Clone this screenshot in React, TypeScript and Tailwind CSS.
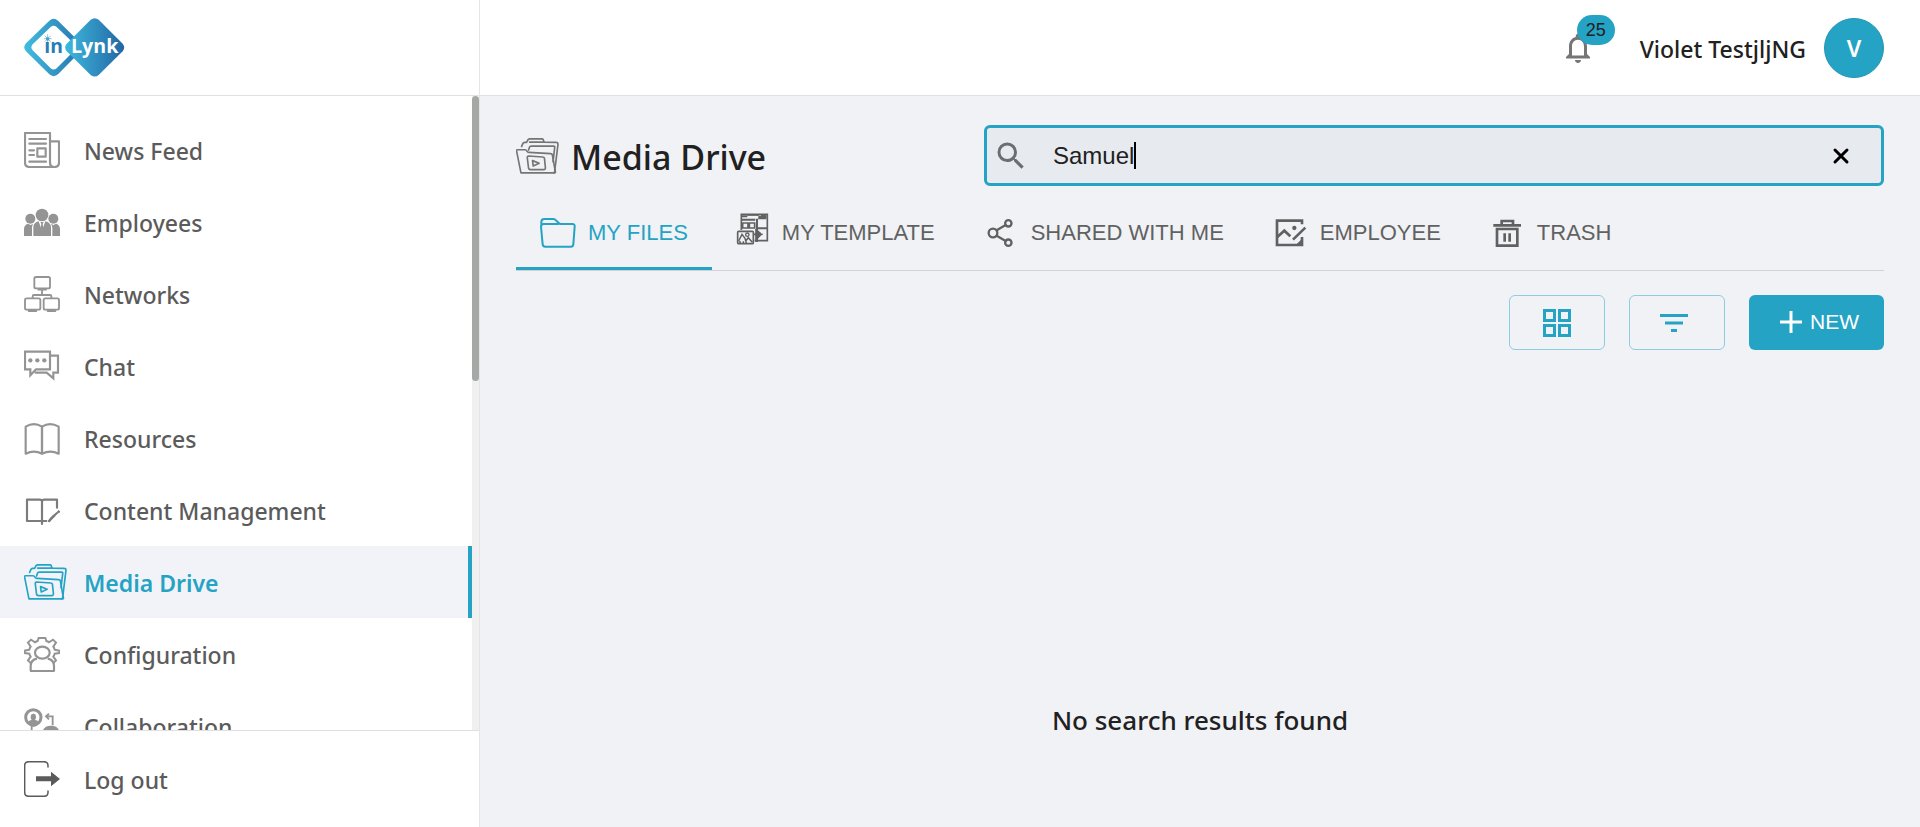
import type { ReactNode } from "react";

function Svg({ box, className, children }: { box: string; className: string; children: ReactNode }) {
  return (
    <svg
      viewBox={box}
      className={className}
      fill="none"
      stroke="currentColor"
      strokeWidth="6.5"
      strokeLinecap="round"
      strokeLinejoin="round"
      aria-hidden="true"
    >
      {children}
    </svg>
  );
}

const NewsIcon = () => (
  <Svg box="72 66 108 108" className="size-9">
    <path d="M150 158V69H75v88q0 14 13 14h76q13 0 13-14V94h-27M150 157q0 14 12 14" />
    <path d="M88 87h50M88 101h50M88 155h50M88 121h14M88 135h14M112 115h25v25h-25z" />
  </Svg>
);

const EmployeesIcon = () => (
  <Svg box="72 282 108 108" className="size-9">
    <g fill="currentColor" stroke="none">
      <circle cx="126" cy="315" r="19" />
      <circle cx="91" cy="326" r="15" />
      <circle cx="160" cy="326" r="15" />
      <path d="M72 378v-20q0-14 12-17l8 4 7-4q-3 6-3 14v23zM180 378v-20q0-14-12-17l-8 4-7-4q4 6 4 14v23z" />
      <path d="M100 378v-26q0-14 16-18l10 28 10-28q17 4 17 18v26z" />
      <path d="M121 336h10l-3 6 3 16-5 6-5-6 3-16z" />
    </g>
  </Svg>
);

const NetworksIcon = () => (
  <Svg box="72 498 108 108" className="size-9">
    <g strokeWidth="5.5">
      <rect x="103" y="501" width="47" height="34" rx="5" />
      <rect x="75" y="565" width="46" height="34" rx="5" />
      <rect x="131" y="565" width="46" height="34" rx="5" />
      <path d="M115 539h23M126 540v14M98 563v-4q0-4 4-4h48q4 0 4 4v4M86 603h23M143 603h23" />
    </g>
  </Svg>
);

const ChatIcon = () => (
  <Svg box="72 54 108 108" className="size-9">
    <path strokeLinejoin="miter" d="M75 65h75v53h-42l-17 18v-18H75zM154 77h20v51h-14v17l-20-17h-33" />
    <g fill="currentColor" stroke="none">
      <circle cx="91" cy="91" r="6.5" />
      <circle cx="112" cy="91" r="6.5" />
      <circle cx="133" cy="91" r="6.5" />
    </g>
  </Svg>
);

const ResourcesIcon = () => (
  <Svg box="72 270 108 108" className="size-9">
    <path d="M126 290q-24-15-49 0v81q25-12 49 0 25-12 50 0v-81q-26-15-50 0zv81" />
    <path d="M126 290v80" />
  </Svg>
);

const ContentIcon = () => (
  <Svg box="72 486 108 108" className="size-9">
    <g className="text-[#7c7c7c]">
      <path d="M126 513q-2-4-6-4H81v64h58M126 513q2-4 6-4h39v24M126 513v69M148 573l6-9 17-15" />
      <path d="M147 573l16-16" strokeWidth="7" />
      <circle cx="176" cy="545" r="3" fill="currentColor" strokeWidth="3" />
    </g>
  </Svg>
);

const MediaIcon = () => (
  <Svg box="72 102 130 108" className="h-9 w-[43px]">
    <g strokeWidth="5">
      <path d="M87 207 74 142q-2-5 3-5h22q4 0 6 4t6 4l66 4q4 0 5 4l9 51q1 3-3 3z" />
      <path d="M89 127l4-9q1-3 5-3h6l4-8q2-3 6-3h36q4 0 5 4l1 6 38 1q5 0 5 5l-10 82q-1 5-3 5" />
      <path d="M113 114h44M110 138l3-9q1-3 5-3h68q4 0 3 4l-5 43" />
      <path d="M106 160q0-4 4-4l43 3q4 0 5 4l3 29q0 5-4 5h-42q-4 0-5-4zM122 170l20 8-18 8z" />
    </g>
  </Svg>
);

const ConfigIcon = () => (
  <Svg box="72 318 108 108" className="size-9">
    <path
      strokeLinejoin="miter"
      strokeLinecap="butt"
      strokeWidth="6"
      d="M93 400l-9-9 8-11q-3-5-4-9l-14-2v-7l14-3q1-5 4-9l-8-12 9-9 12 8q4-3 8-4l3-9h20l3 9q5 1 8 4l12-8 9 9-8 12q3 4 4 9l14 3v7l-14 2q-1 5-4 9l8 11-9 9"
    />
    <ellipse cx="127" cy="368" rx="22" ry="18" />
    <path d="M92 423v-15q0-18 19-22M162 423v-15q0-18-19-22M90 423h74" strokeLinecap="butt" />
  </Svg>
);

const CollabIcon = () => (
  <Svg box="72 534 108 108" className="size-9">
    <circle cx="100" cy="562" r="23" strokeWidth="9" />
    <g fill="currentColor" stroke="none">
      <ellipse cx="100" cy="561" rx="8" ry="10" />
      <path d="M82 579q4-9 14-10h8q10 1 14 10-8 11-18 11t-18-11z" />
      <path d="M128 604q4-17 25-17t25 17z" />
    </g>
    <path d="M95 588v16M158 586v-27h-18M147 551l-9 8 9 9" strokeWidth="5.5" strokeLinecap="butt" strokeLinejoin="miter" />
  </Svg>
);

const LogoutIcon = () => (
  <Svg box="72 693 108 108" className="size-9">
    <path strokeWidth="4.5" d="M144 711v-4q0-12-12-12H86q-12 0-12 12v80q0 12 12 12h46q12 0 12-12v-4" />
    <path fill="currentColor" stroke="none" d="M108 739h45v-14l27 22-27 22v-15h-45z" />
  </Svg>
);

const FolderIcon = () => (
  <Svg box="120 345 108 108" className="size-9">
    <path
      strokeWidth="6"
      d="M124 377v-11q0-9 9-9h27q5 0 8 4l8 8q3 3 7 3h34q8 0 7 8l-4 53q-1 7-7 7h-77q-7 0-8-7l-5-53q0-8 8-8h44"
    />
  </Svg>
);

const TemplateIcon = () => (
  <Svg box="708 343 102 102" className="-mt-1.5 size-[34px]">
    <g strokeLinecap="butt" strokeLinejoin="miter" strokeWidth="5">
      <path d="M724 394v-47h78v79h-38" />
      <path d="M724 353h18M775 355h24M724 363h42M771 360v70M771 389h31" strokeWidth="6" />
      <path d="M742 350h36" strokeWidth="3" />
      <path d="M728 373h16v15h-16zM748 373h16v15h-16zM768 391v38" />
      <path d="M785 350l12 1v9h-20z" strokeWidth="4" />
      <path d="M713 401q0-3 3-3h41q3 0 3 3v31q0 3-3 3h-41q-3 0-3-3z" />
      <path d="M716 427l10-20 9 12 4 14M737 427l8-10 12 14M720 433v-6M730 434v-6" strokeWidth="4.5" />
      <circle cx="742" cy="408" r="5" strokeWidth="4" />
      <path d="M762 407h26M775 396v23" strokeWidth="5" />
      <circle cx="775" cy="407" r="6" fill="currentColor" />
    </g>
  </Svg>
);

const ShareIcon = () => (
  <Svg box="820 78 108 108" className="size-9">
    <g strokeWidth="7">
      <circle cx="850" cy="132" r="13" />
      <circle cx="896" cy="103" r="9.5" />
      <circle cx="896" cy="161" r="9.5" />
      <path d="M861 124l27-16M861 140l27 16" />
    </g>
  </Svg>
);

const ImageEditIcon = () => (
  <Svg box="152 78 108 108" className="size-9">
    <g strokeLinecap="butt" strokeLinejoin="miter" strokeWidth="8">
      <path d="M242 106V95h-75v73h75v-24" />
      <path d="M167 145l22-20 18 17M215 152l37-36" />
      <path d="M224 168l19-18v19z" fill="currentColor" strokeWidth="2" />
      <circle cx="219" cy="117" r="6.5" fill="currentColor" stroke="none" />
    </g>
  </Svg>
);

const TrashIcon = () => (
  <Svg box="796 78 108 108" className="size-9">
    <g strokeLinecap="butt" strokeLinejoin="miter" strokeWidth="8">
      <path d="M809 109h83M834 108V96h34v12M820 120h61v50h-61z" />
      <path d="M843 133v25M858 133v25" />
    </g>
  </Svg>
);

function Logo() {
  return (
    <svg viewBox="72 54 303 177" className="h-[59px] w-[101px]" role="img" aria-label="inLynk">
      <defs>
        <linearGradient id="ring" x1="0" x2="1">
          <stop offset="0" stopColor="#42bce0" />
          <stop offset="1" stopColor="#2573ad" />
        </linearGradient>
        <linearGradient id="solid" x1="0" x2="1">
          <stop offset="0" stopColor="#3fb9de" />
          <stop offset="1" stopColor="#2266a3" />
        </linearGradient>
      </defs>
      <path
        fill="url(#ring)"
        fillRule="evenodd"
        d="M148 62q13-11 26 0l68 68q11 12 0 24l-68 69q-13 11-26 0l-70-69q-11-12 0-24zM152 81l-54 52q-8 9 0 18l54 54q9 7 18 0l54-54q8-9 0-18l-54-52q-9-8-18 0z"
      />
      <path fill="url(#solid)" d="M272 59q12-9 24 0l72 72q9 11 0 23l-72 71q-12 9-24 0l-72-71q-9-12 0-23z" />
      <g stroke="#5d9fc4" strokeWidth="2">
        <path d="M143 103v26M132 116h23M134 107l18 18M152 107l-18 18" />
      </g>
      <circle cx="143" cy="117" r="5" fill="#31a8d4" />
      <text x="133" y="160" fontSize="58" fontWeight="700" fill="#2a7db5" className="font-['Open_Sans',sans-serif]">
        ın
      </text>
      <text x="213" y="160" fontSize="59" fontWeight="700" fill="#fff" className="font-['Open_Sans',sans-serif]">
        Lynk
      </text>
    </svg>
  );
}

const navItems = [
  { label: "News Feed", icon: <NewsIcon /> },
  { label: "Employees", icon: <EmployeesIcon /> },
  { label: "Networks", icon: <NetworksIcon /> },
  { label: "Chat", icon: <ChatIcon /> },
  { label: "Resources", icon: <ResourcesIcon /> },
  { label: "Content Management", icon: <ContentIcon /> },
  { label: "Media Drive", icon: <MediaIcon />, active: true },
  { label: "Configuration", icon: <ConfigIcon /> },
  { label: "Collaboration", icon: <CollabIcon /> },
];

const tabs = [
  { label: "MY FILES", icon: <FolderIcon />, active: true },
  { label: "MY TEMPLATE", icon: <TemplateIcon /> },
  { label: "SHARED WITH ME", icon: <ShareIcon /> },
  { label: "EMPLOYEE", icon: <ImageEditIcon /> },
  { label: "TRASH", icon: <TrashIcon /> },
];

function Sidebar() {
  return (
    <aside className="flex w-[480px] shrink-0 flex-col border-r border-[#e4e5e7] bg-white">
      <div className="flex h-24 shrink-0 items-center border-b border-[#dfe0e2] px-6">
        <Logo />
      </div>
      <div className="flex min-h-0 flex-1">
        <nav className="min-w-0 flex-1 overflow-hidden pt-[18px]">
          <ul>
            {navItems.map((item) => (
              <li key={item.label}>
                <a
                  href="#"
                  className={
                    item.active
                      ? "flex h-[72px] items-center border-r-4 border-[#24a3c4] bg-[#f2f3f8] pl-6 text-[#24a3c4]"
                      : "flex h-[72px] items-center pl-6 text-[#949494]"
                  }
                >
                  <span className="w-15 shrink-0">{item.icon}</span>
                  <span
                    className={
                      item.active ? "pt-0.5 text-[23px] font-semibold" : "pt-0.5 text-[23px] font-medium text-[#5b5b5b]"
                    }
                  >
                    {item.label}
                  </span>
                </a>
              </li>
            ))}
          </ul>
        </nav>
        <div className="w-[7px] shrink-0 bg-[#f0f0f0]">
          <div className="h-[45%] rounded-full bg-[#a5a8a5]" />
        </div>
      </div>
      <button type="button" className="flex h-[97px] shrink-0 items-center border-t border-[#dfe0e2] pl-6 text-[#5b5b5b]">
        <span className="w-15 shrink-0">
          <LogoutIcon />
        </span>
        <span className="pt-0.5 text-[23px] font-medium">Log out</span>
      </button>
    </aside>
  );
}

function Header() {
  return (
    <header className="flex h-24 shrink-0 items-center justify-end border-b border-[#dfe0e2] bg-white pr-9">
      <button type="button" aria-label="Notifications" className="relative mr-11 text-[#757575]">
        <svg viewBox="0 0 24 24" className="size-9" fill="currentColor" aria-hidden="true">
          <path d="M12 22c1.1 0 2-.9 2-2h-4c0 1.100.9 2 2 2zm6-6v-5c0-3.070-1.630-5.640-4.500-6.320V4c0-.83-.67-1.500-1.500-1.500s-1.500.67-1.500 1.500v.68C7.640 5.360 6 7.920 6 11v5l-2 2v1h16v-1l-2-2zm-2 1H8v-6c0-2.480 1.510-4.500 4-4.500s4 2.020 4 4.500v6z" />
        </svg>
        <span className="absolute -top-[15px] left-[17px] flex h-[30px] w-[38px] items-center justify-center rounded-full bg-[#24a3c4] font-['Liberation_Sans',sans-serif] text-lg text-[#212121]">
          25
        </span>
      </button>
      <span className="mr-[18px] pt-1 text-[23px] font-medium text-[#212121]">Violet TestjljNG</span>
      <span className="flex size-15 items-center justify-center rounded-full border border-[#2396b4] bg-[#24a3c4] pt-0.5 text-[23px] font-semibold text-white">
        V
      </span>
    </header>
  );
}

export default function App() {
  return (
    <div className="flex h-screen overflow-hidden bg-[#f0f2f6] font-['Noto_Sans','Open_Sans',sans-serif]">
      <Sidebar />
      <div className="flex min-w-0 flex-1 flex-col">
        <Header />
        <main className="flex-1 px-9 pt-[29px]">
          <div className="flex h-[61px] items-center justify-between">
            <h1 className="flex items-center gap-3 text-[#212121]">
              <span className="text-[#757575]">
                <MediaIcon />
              </span>
              <span className="pt-1 text-[34px] font-medium">Media Drive</span>
            </h1>
            <div className="flex h-full w-[900px] items-center rounded-md border-3 border-[#24a3c4] bg-[#e7eaef] pr-7 pl-1.5">
              <svg viewBox="0 0 24 24" className="size-9 shrink-0 text-[#6b6e70]" fill="currentColor" aria-hidden="true">
                <path d="M15.500 14h-.79l-.28-.27A6.471 6.471 0 0 0 16 9.500 6.500 6.500 0 1 0 9.500 16c1.610 0 3.090-.59 4.230-1.570l.27.28v.79l5 4.990L20.490 19l-4.990-5zm-6 0C7.010 14 5 11.990 5 9.500S7.010 5 9.500 5 14 7.010 14 9.500 11.990 14 9.500 14z" />
              </svg>
              <div className="ml-6 flex min-w-0 flex-1 items-center">
                <input
                  type="text"
                  aria-label="Search"
                  defaultValue="Samuel"
                  className="field-sizing-content bg-transparent font-['Liberation_Sans',sans-serif] text-2xl text-[#212121] outline-none"
                />
                <span className="h-[27px] w-0.5 bg-black" />
              </div>
              <button type="button" aria-label="Clear search" className="text-black">
                <svg viewBox="0 0 24 24" className="size-6" stroke="currentColor" strokeWidth="3" strokeLinecap="round" aria-hidden="true">
                  <path d="M6 6l12 12M18 6L6 18" />
                </svg>
              </button>
            </div>
          </div>

          <div role="tablist" className="mt-3 flex border-b border-[#d0d2d6] font-['Liberation_Sans',sans-serif] text-[22px]">
            {tabs.map((tab) => (
              <button
                key={tab.label}
                type="button"
                role="tab"
                aria-selected={Boolean(tab.active)}
                className={
                  tab.active
                    ? "flex h-[72px] items-center gap-3 border-b-3 border-[#24a3c4] px-6 text-[#24a3c4]"
                    : "flex h-[72px] items-center gap-3 border-b-3 border-transparent px-6 text-[#616161]"
                }
              >
                {tab.icon}
                {tab.label}
              </button>
            ))}
          </div>

          <div className="mt-6 flex justify-end gap-6 text-[#24a3c4]">
            <button type="button" aria-label="Grid view" className="flex h-[55px] w-24 items-center justify-center rounded-md border border-[#8dcde0]">
              <svg viewBox="0 0 28 28" className="size-7" fill="none" stroke="currentColor" strokeWidth="3" aria-hidden="true">
                <path d="M1.500 1.500h10v10h-10zM16.500 1.500h10v10h-10zM1.500 16.500h10v10h-10zM16.500 16.500h10v10h-10z" />
              </svg>
            </button>
            <button type="button" aria-label="Filter" className="flex h-[55px] w-24 items-center justify-center rounded-md border border-[#8dcde0] pr-1.5">
              <svg viewBox="0 0 28 18" className="h-[18px] w-7" fill="currentColor" aria-hidden="true">
                <path d="M0 0h28v3H0zM5 7.500h18v3H5zM11 15h6v3h-6z" />
              </svg>
            </button>
            <button
              type="button"
              className="flex h-[55px] w-[135px] items-center justify-center gap-2 rounded-md bg-[#24a3c4] pb-0.5 pl-1.5 font-['Liberation_Sans',sans-serif] text-[21px] text-white"
            >
              <svg viewBox="0 0 22 22" className="size-[22px]" stroke="currentColor" strokeWidth="3" aria-hidden="true">
                <path d="M11 0v22M0 11h22" />
              </svg>
              NEW
            </button>
          </div>

          <p className="mt-[350px] text-center text-[26px] leading-10 font-medium text-[#212121]">No search results found</p>
        </main>
      </div>
    </div>
  );
}
